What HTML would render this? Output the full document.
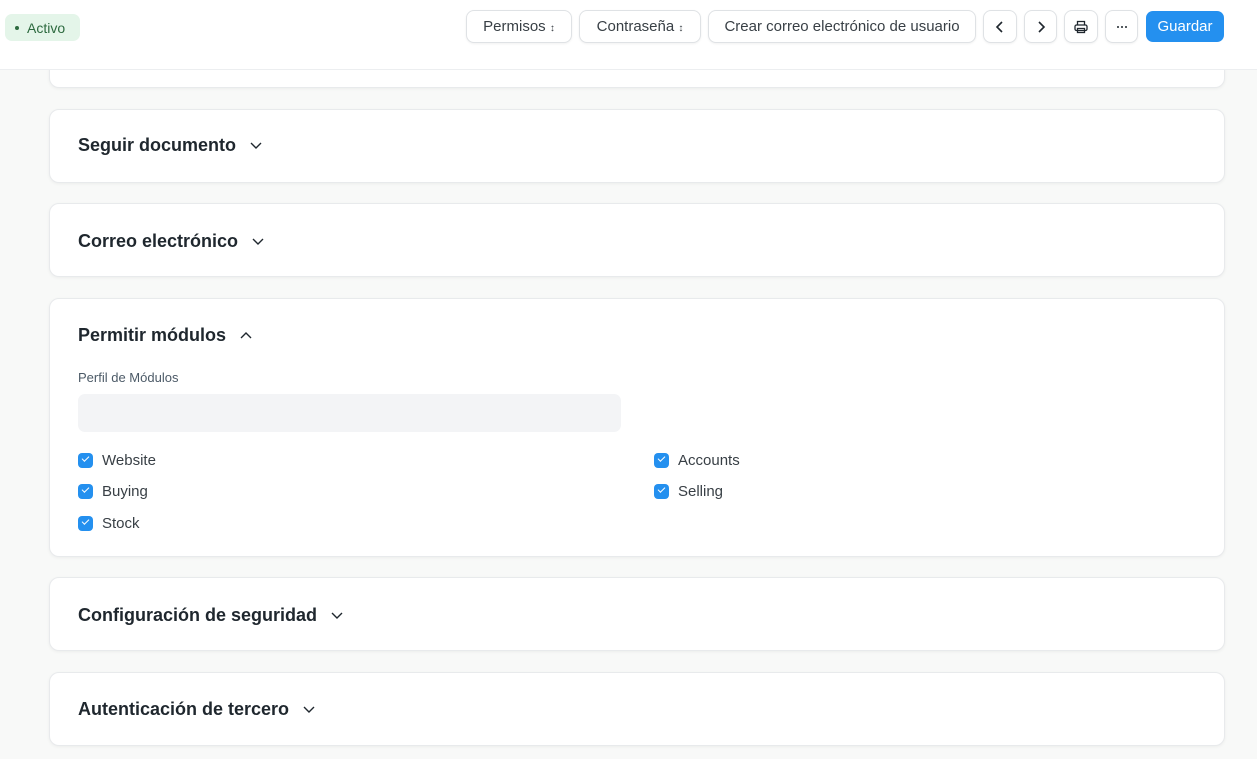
<!DOCTYPE html>
<html><head><meta charset="utf-8"><style>
*{box-sizing:border-box;margin:0;padding:0}
body{width:1257px;height:759px;overflow:hidden;background:#f8f9f8;font-family:"Liberation Sans",sans-serif;color:#1f272e;position:relative}
.hdr{position:absolute;left:0;top:0;width:1257px;height:70px;background:#fff;border-bottom:1px solid #eceef0;z-index:2}
.badge{position:absolute;left:5px;top:14px;width:75px;height:27px;background:#e4f5e9;border-radius:7px;color:#2d6a3f;font-size:14px;line-height:28px;padding-left:10px}
.badge:before{content:"";display:inline-block;width:4px;height:4px;border-radius:50%;background:#2d6a3f;margin-right:8px;vertical-align:middle;position:relative;top:-1px}
.btn{position:absolute;top:10px;height:33px;background:#fff;border:1px solid #dfe2e5;border-radius:8px;font-size:15px;line-height:31px;color:#383f45;text-align:center;box-shadow:0 1px 2px rgba(0,0,0,.06)}
.btn svg{position:absolute;left:50%;top:50%;transform:translate(-50%,-50%)}
.save{position:absolute;left:1146px;top:11px;width:78px;height:31px;background:#2490ef;border-radius:7px;color:#fff;font-size:15px;line-height:31px;text-align:center}
.card{position:absolute;left:49px;width:1176px;background:#fff;border:1px solid #e8eaec;border-radius:10px;box-shadow:0 1px 3px rgba(0,0,0,.05)}
.t{position:absolute;left:28px;font-size:18px;font-weight:bold;color:#1f272e}
.t svg{margin-left:13px;vertical-align:middle;position:relative;top:-1px}
.lbl{position:absolute;font-size:13px;color:#4c5a67}
.inp{position:absolute;left:28px;top:95px;width:543px;height:38px;background:#f3f4f6;border-radius:7px}
.cb{position:absolute;font-size:15px;color:#383f45}
.cb i{display:inline-block;width:15px;height:15px;background:#2490ef;border-radius:4px;vertical-align:middle;margin-right:9px;position:relative;top:-1px}
.cb i:after{content:"";position:absolute;left:4px;top:3px;width:6px;height:3px;border-left:1.6px solid #fff;border-bottom:1.6px solid #fff;transform:rotate(-45deg)}
</style></head><body>
<div class="hdr">
<div class="badge">Activo</div>
<div class="btn" style="left:466px;width:106px">Permisos <span style="font-size:10px">&#8597;</span></div>
<div class="btn" style="left:579px;width:122px">Contraseña <span style="font-size:10px">&#8597;</span></div>
<div class="btn" style="left:708px;width:268px">Crear correo electrónico de usuario</div>
<div class="btn" style="left:983px;width:34px"><svg width="14" height="14" viewBox="0 0 14 14"><path d="M9 2 L4 7 L9 12" fill="none" stroke="#1f272e" stroke-width="1.6"/></svg></div>
<div class="btn" style="left:1024px;width:33px"><svg width="14" height="14" viewBox="0 0 14 14"><path d="M5 2 L10 7 L5 12" fill="none" stroke="#1f272e" stroke-width="1.6"/></svg></div>
<div class="btn" style="left:1064px;width:34px"><svg width="16" height="16" viewBox="0 0 16 16" fill="none" stroke="#1f272e" stroke-width="1.3"><path d="M4.5 6V2.5h7V6"/><rect x="2" y="6" width="12" height="5.5" rx="1.5"/><rect x="4.5" y="9.5" width="7" height="4"/></svg></div>
<div class="btn" style="left:1105px;width:33px"><svg width="14" height="4" viewBox="0 0 14 4"><circle cx="3" cy="2" r="1" fill="#1f272e"/><circle cx="7" cy="2" r="1" fill="#1f272e"/><circle cx="11" cy="2" r="1" fill="#1f272e"/></svg></div>
<div class="save">Guardar</div>
</div>
<div class="card" style="top:20px;height:68px"></div>
<div class="card" style="top:109px;height:74px"><div class="t" style="top:25px">Seguir documento<svg width="14" height="10" viewBox="0 0 14 10"><path d="M2 3 L7 8 L12 3" fill="none" stroke="#1f272e" stroke-width="1.4"/></svg></div></div>
<div class="card" style="top:203px;height:74px"><div class="t" style="top:27px">Correo electrónico<svg width="14" height="10" viewBox="0 0 14 10"><path d="M2 3 L7 8 L12 3" fill="none" stroke="#1f272e" stroke-width="1.4"/></svg></div></div>
<div class="card" style="top:298px;height:259px">
<div class="t" style="top:26px">Permitir módulos<svg width="14" height="10" viewBox="0 0 14 10"><path d="M2 8 L7 3 L12 8" fill="none" stroke="#1f272e" stroke-width="1.4"/></svg></div>
<div class="lbl" style="left:28px;top:71px">Perfil de Módulos</div>
<div class="inp"></div>
<div class="cb" style="left:28px;top:153px"><i></i>Website</div>
<div class="cb" style="left:28px;top:184px"><i></i>Buying</div>
<div class="cb" style="left:28px;top:216px"><i></i>Stock</div>
<div class="cb" style="left:604px;top:153px"><i></i>Accounts</div>
<div class="cb" style="left:604px;top:184px"><i></i>Selling</div>
</div>
<div class="card" style="top:577px;height:74px"><div class="t" style="top:27px">Configuración de seguridad<svg width="14" height="10" viewBox="0 0 14 10"><path d="M2 3 L7 8 L12 3" fill="none" stroke="#1f272e" stroke-width="1.4"/></svg></div></div>
<div class="card" style="top:672px;height:74px"><div class="t" style="top:26px">Autenticación de tercero<svg width="14" height="10" viewBox="0 0 14 10"><path d="M2 3 L7 8 L12 3" fill="none" stroke="#1f272e" stroke-width="1.4"/></svg></div></div>
</body></html>
